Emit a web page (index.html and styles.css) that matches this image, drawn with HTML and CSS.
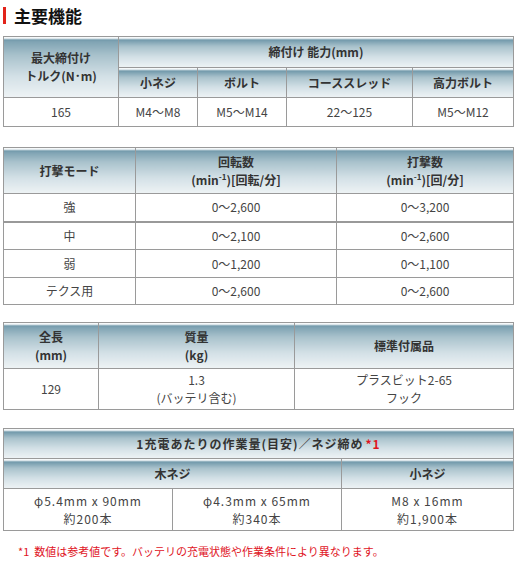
FILE: index.html
```html
<!DOCTYPE html>
<html lang="ja">
<head>
<meta charset="utf-8">
<title>主要機能</title>
<link rel="stylesheet" href="styles.css">
</head>
<body>
<div class="page">
  <h2 class="title"><span class="bar"></span>主要機能</h2>

  <table class="spec t1">
    <colgroup><col class="c115"><col class="c79"><col class="c89"><col class="c126"><col class="c101"></colgroup>
    <tr class="h31">
      <th rowspan="2">最大締付け<br>トルク(N･m)</th>
      <th colspan="4">締付け 能力(mm)</th>
    </tr>
    <tr class="h30">
      <th>小ネジ</th><th>ボルト</th><th>コーススレッド</th><th>高力ボルト</th>
    </tr>
    <tr class="h29">
      <td>165</td><td>M4～M8</td><td>M5～M14</td><td>22～125</td><td>M5～M12</td>
    </tr>
  </table>

  <table class="spec t2">
    <colgroup><col class="c132"><col class="c201"><col class="c177"></colgroup>
    <tr class="h46">
      <th>打撃モード</th>
      <th>回転数<br>(min<sup>-1</sup>)[回転/分]</th>
      <th>打撃数<br>(min<sup>-1</sup>)[回/分]</th>
    </tr>
    <tr class="h28"><td>強</td><td>0～2,600</td><td>0～3,200</td></tr>
    <tr class="h28 thick"><td>中</td><td>0～2,100</td><td>0～2,600</td></tr>
    <tr class="h28"><td>弱</td><td>0～1,200</td><td>0～1,100</td></tr>
    <tr class="h27"><td>テクス用</td><td>0～2,600</td><td>0～2,600</td></tr>
  </table>

  <table class="spec t3">
    <colgroup><col class="c95"><col class="c196"><col class="c219"></colgroup>
    <tr class="h46">
      <th>全長<br>(mm)</th>
      <th>質量<br>(kg)</th>
      <th>標準付属品</th>
    </tr>
    <tr class="h41">
      <td>129</td>
      <td>1.3<br>(バッテリ含む)</td>
      <td>プラスビット2-65<br>フック</td>
    </tr>
  </table>

  <table class="spec t4">
    <colgroup><col class="c169"><col class="c169"><col class="c172"></colgroup>
    <tr class="h30">
      <th colspan="3" class="wide">1充電あたりの作業量(目安)／ネジ締め<span class="mark">*1</span></th>
    </tr>
    <tr class="h30">
      <th colspan="2">木ネジ</th>
      <th>小ネジ</th>
    </tr>
    <tr class="h42">
      <td class="sp">φ5.4mm x 90mm<br>約200本</td>
      <td class="sp">φ4.3mm x 65mm<br>約340本</td>
      <td class="sp">M8 x 16mm<br>約1,900本</td>
    </tr>
  </table>

  <p class="note">*1&nbsp;&nbsp;数値は参考値です。バッテリの充電状態や作業条件により異なります。</p>
</div>
</body>
</html>
```

FILE: styles.css
```css
* { box-sizing: border-box; }
html, body { margin: 0; padding: 0; background: #fff; }
body {
  font-family: "Noto Sans CJK JP", "Noto Sans", sans-serif;
  color: #333;
}
.page { padding: 6px 3px 0 3px; width: 527px; }

.title {
  display: flex;
  align-items: center;
  gap: 8px;
  margin: 0;
  height: 19px;
  font-size: 17px;
  font-weight: bold;
  color: #111;
  line-height: 19px;
}
.bar {
  display: block;
  width: 3px;
  height: 17px;
  background: #e2231a;
}

.spec {
  border-collapse: collapse;
  width: 510px;
  table-layout: fixed;
  border: 1px solid #9a9a9a;
  font-size: 12px;
}
.t1 { margin-top: 11px; }
.t2 { margin-top: 20px; }
.t3 { margin-top: 17px; }
.t4 { margin-top: 18px; }

.spec th, .spec td {
  border: 1px solid #9a9a9a;
  text-align: center;
  vertical-align: middle;
  padding: 0;
  line-height: 18px;
}
.spec th {
  font-weight: bold;
  color: #333;
  background: linear-gradient(to bottom, #ffffff 0, #ffffff 1px, #6f98a9 2px, #7fa3b3 4px, #a9c2cc 30%, #d3e0e6 65%, #eef3f5 100%);
}
.spec td { background: #fff; color: #444; }
.spec tr.thick td { border-top: 2px solid #999; }

.spec sup { font-size: 8px; vertical-align: baseline; line-height: 0; position: relative; top: -5px; }

.c115 { width: 115px; } .c79 { width: 79px; } .c89 { width: 89px; }
.c126 { width: 126px; } .c101 { width: 101px; }
.c132 { width: 132px; } .c201 { width: 201px; } .c177 { width: 177px; }
.c95 { width: 95px; } .c196 { width: 196px; } .c219 { width: 219px; }
.c169 { width: 169px; } .c172 { width: 172px; }

.h27 { height: 27px; } .h28 { height: 28px; } .h29 { height: 29px; }
.h30 { height: 30px; } .h31 { height: 31px; } .h41 { height: 41px; }
.h42 { height: 42px; } .h46 { height: 46px; }

.wide { letter-spacing: 1px; }
.sp { letter-spacing: 1px; }
.mark { color: #e0141e; font-weight: bold; margin-left: 2px; }

.note {
  margin: 13px 0 0 15px;
  font-size: 11px;
  color: #e0141e;
  line-height: 14px;
}
```
